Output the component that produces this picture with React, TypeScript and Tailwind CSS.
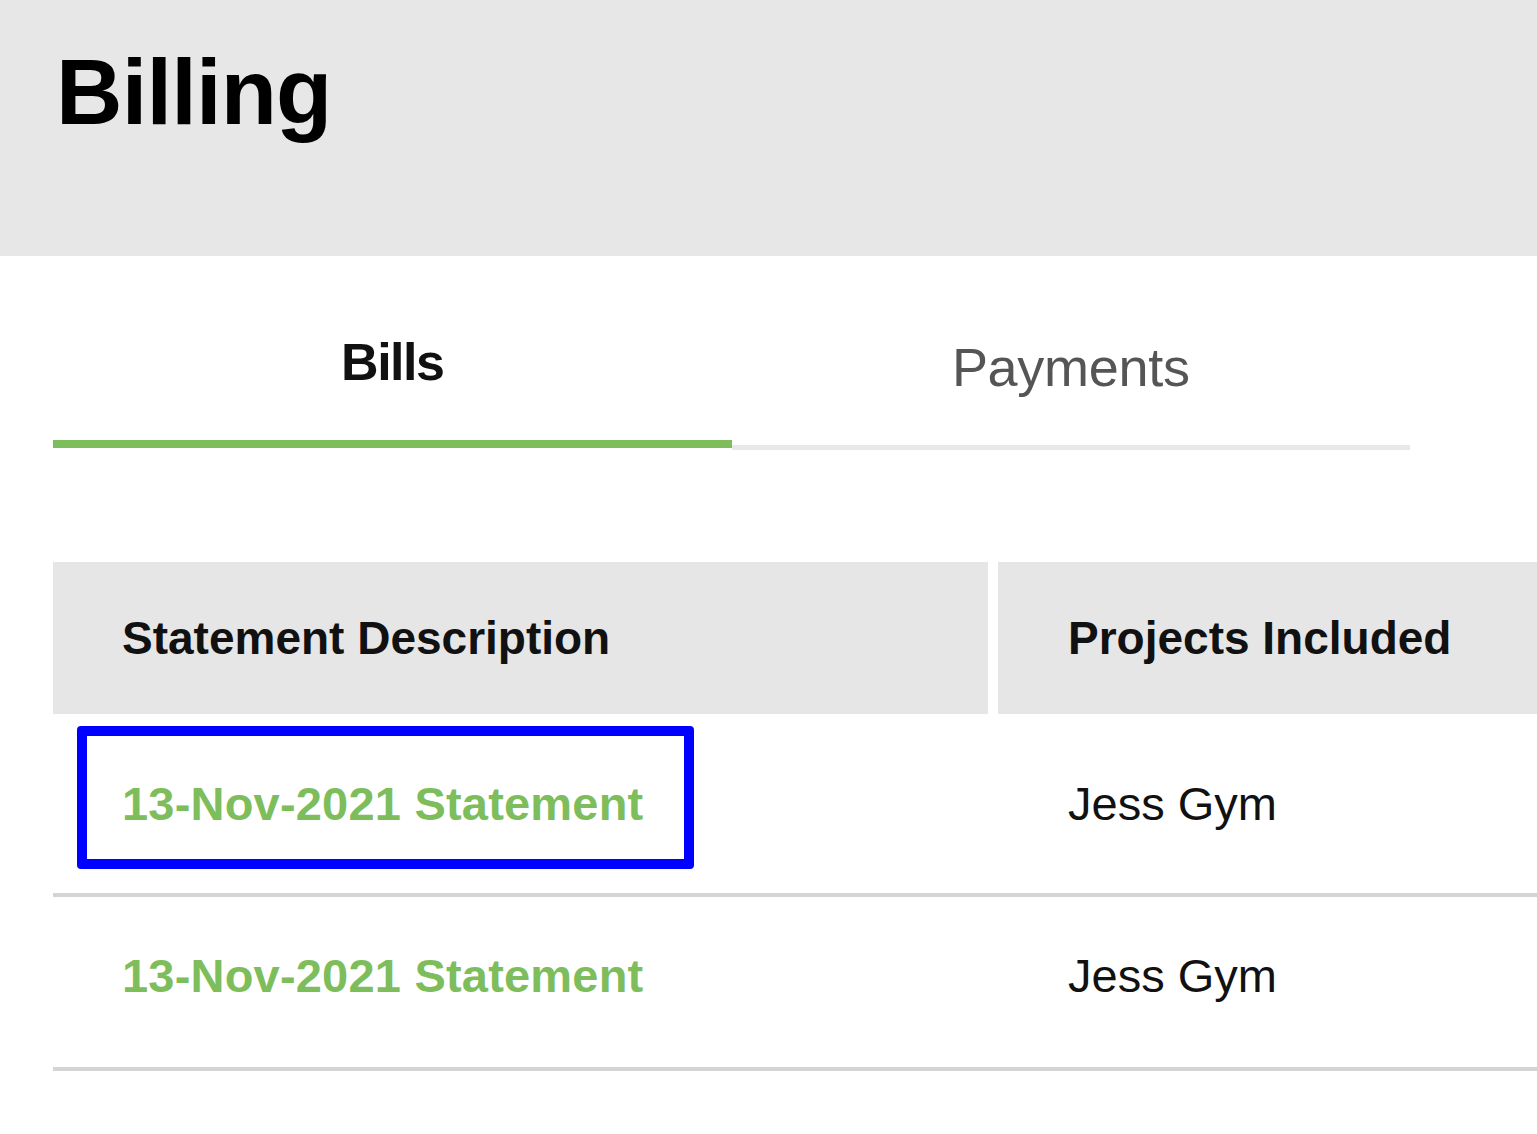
import React from "react";

const font = { fontFamily: '"Liberation Sans", Arial, Helvetica, sans-serif' };

function Row({ first, h, pb }: { first?: boolean; h: string; pb: string }) {
  return (
    <div className={`flex border-b-4 border-[#d4d4d4] ${h}`}>
      <div className={`relative w-[945px] shrink-0 flex items-center pl-[69px] ${pb}`}>
        {first && (
          <div className="absolute left-[24px] top-[12px] w-[617px] h-[143px] border-[10px] border-[#0000ff] rounded-[4px]" />
        )}
        <span className="text-[47px] font-bold text-[#7dbd5b] tracking-[0.2px] leading-none">
          13-Nov-2021 Statement
        </span>
      </div>
      <div className={`flex items-center pl-[70px] ${pb}`}>
        <span className="text-[47px] text-[#111] leading-none">Jess Gym</span>
      </div>
    </div>
  );
}

export default function App() {
  return (
    <div className="w-[1537px] h-[1134px] overflow-hidden bg-white" style={font}>
      <div className="h-[256px] bg-[#e7e7e7] pl-[56px] pt-[46px]">
        <h1 className="text-[92px] font-bold leading-none tracking-[-0.8px] text-black">Billing</h1>
      </div>

      <div className="pl-[53px] w-[2200px]">
        <div className="flex w-[1357px] mt-[80px]">
          <div className="flex-1 flex flex-col items-center">
            <span className="text-[52px] font-bold leading-none tracking-[-1.5px] text-[#111]">Bills</span>
            <div className="mt-[52px] h-[8px] w-full bg-[#7dbd5b]" />
          </div>
          <div className="flex-1 flex flex-col items-center">
            <span className="text-[54px] leading-none tracking-[-0.3px] text-[#555] pt-[4px]">Payments</span>
            <div className="mt-[48px] h-[8px] w-full flex flex-col justify-end">
              <div className="h-[5px] w-full bg-[#e8e8e8]" />
            </div>
          </div>
        </div>

        <div className="mt-[112px] w-[1700px]">
          <div className="flex gap-[10px] h-[152px]">
            <div className="w-[935px] bg-[#e6e6e6] flex items-center pl-[69px]">
              <span className="text-[46px] font-bold leading-none text-[#111]">Statement Description</span>
            </div>
            <div className="flex-1 bg-[#e6e6e6] flex items-center pl-[70px]">
              <span className="text-[46px] font-bold leading-none text-[#111]">Projects Included</span>
            </div>
          </div>
          <Row first h="h-[183px]" pb="pb-0" />
          <Row h="h-[174px]" pb="pb-[14px]" />
        </div>
      </div>
    </div>
  );
}
